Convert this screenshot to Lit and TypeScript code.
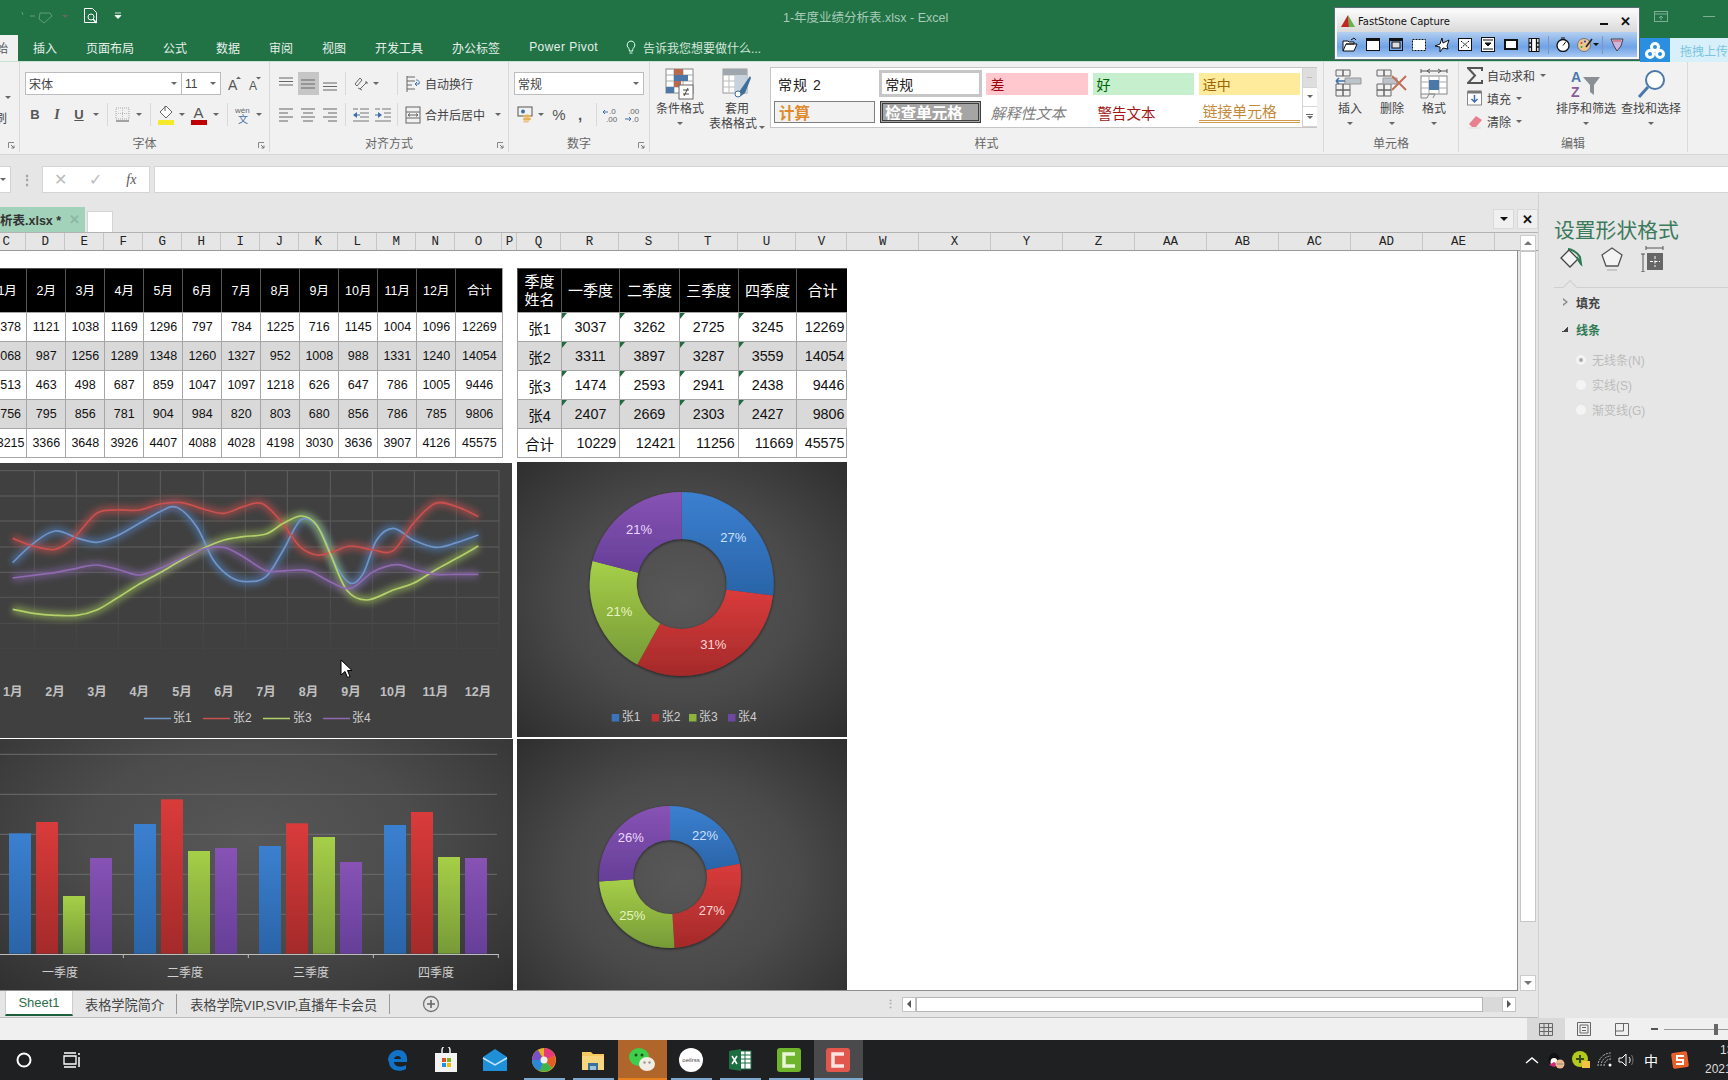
import { LitElement, html, css, svg } from "lit";
import { customElement } from "lit/decorators.js";

const ico = (w: number, h: number, body: unknown) =>
  html`<svg width=${w} height=${h} viewBox="0 0 ${w} ${h}" fill="none">${body}</svg>`;

const alignLines = (ys: number[], kind: string) => {
  const g = ys.map((y, i) => {
    const long = i % 2 === 0;
    let x1 = 1, x2 = 15;
    if (!long && kind === "c") { x1 = 3; x2 = 13; }
    if (!long && kind === "l") { x2 = 10; }
    if (!long && kind === "r") { x1 = 6; }
    return svg`<line x1=${x1} x2=${x2} y1=${y} y2=${y} stroke="#666"/>`;
  });
  return ico(16, 16, g);
};

const Icons = {
  preview: ico(16, 18, svg`<path d="M1.5 1.5h8l4 4v10h-12z" stroke="#fff" fill="#217346"/><circle cx="8" cy="10" r="3" stroke="#fff"/><path d="M10 12l3.5 4" stroke="#fff" stroke-width="1.5"/>`),
  redoDim: ico(38, 16, svg`<path d="M2 4l1 3M20 5h10l2 3-8 7-5-4z" stroke="#5f9d7c"/><path d="M10 8h5" stroke="#5f9d7c"/>`),
  qatDrop: ico(8, 8, svg`<path d="M1 1h6M1 3.5h6l-3 3z" stroke="#fff" fill="#fff" stroke-width=".8"/>`),
  bulb: ico(10, 15, svg`<path d="M5 1a4 4 0 0 0-2.5 7c.8.8.8 1.5.8 3h3.4c0-1.500 0-2.200.8-3A4 4 0 0 0 5 1zM3.500 13h3" stroke="#dfe" />`),
  grow: ico(14, 16, svg`<text x="0" y="14" font-size="14" fill="#555" font-family="Liberation Sans">A</text><path d="M8 3l2.500-2.500L13 3z" fill="#666"/>`),
  shrink: ico(14, 16, svg`<text x="1" y="14" font-size="12" fill="#555" font-family="Liberation Sans">A</text><path d="M8 1h5l-2.500 2.500z" fill="#666"/>`),
  border: ico(15, 15, svg`<rect x="1" y="1" width="13" height="11" stroke="#aaa" stroke-dasharray="1 1"/><path d="M7.500 1v11M1 6.500h13" stroke="#bbb" stroke-dasharray="1 1"/><path d="M1 14h13" stroke="#555"/>`),
  fill: ico(18, 20, svg`<path d="M9 1l6 6-6 6-6-6z" stroke="#666" fill="#fff"/><path d="M8 1v5" stroke="#666"/><rect x="1" y="15" width="16" height="5" fill="#f4ea2a"/>`),
  color: ico(16, 20, svg`<text x="2.500" y="13" font-size="15" fill="#555" font-family="Liberation Sans">A</text><rect y="15" width="16" height="5" fill="#c00000"/>`),
  wen: ico(16, 20, svg`<text x="0" y="8" font-size="8" fill="#666" font-family="Liberation Sans">wén</text><text x="3" y="18" font-size="10" fill="#4a6fa5" font-family="Noto Sans CJK SC">文</text>`),
  orient: ico(16, 16, svg`<path d="M2 8l5-6 2 2-5 6zM7 13l7-7M12 6h2v2" stroke="#666"/><path d="M5 12l4 2" stroke="#666"/>`),
  wrap: ico(15, 18, svg`<path d="M1 2h8M1 6h8M1 10h5M1 14h8" stroke="#666"/><path d="M1 1v16" stroke="#666"/><path d="M9 9h4c1-3-1-4-3-4M11 7L9 9l2 2" stroke="#3f6fa8"/>`),
  merge: ico(16, 18, svg`<rect x="1" y="1" width="14" height="16" stroke="#666"/><path d="M1 6h14M1 12h14M3 9h10M3 9l2-1.500M3 9l2 1.500M13 9l-2-1.500M13 9l-2 1.500" stroke="#666"/>`),
  indentL: ico(18, 16, svg`<path d="M8 2h9M8 6h9M8 10h9M1 14h16M1 2h5" stroke="#777"/><path d="M1 8l4-3v6z" fill="#3f6fa8"/><path d="M5 8h3" stroke="#3f6fa8"/>`),
  indentR: ico(18, 16, svg`<path d="M8 2h9M10 6h7M10 10h7M1 14h16M1 2h5" stroke="#777"/><path d="M8 8l-4-3v6z" fill="#3f6fa8"/><path d="M1 8h3" stroke="#3f6fa8"/>`),
  account: ico(16, 17, svg`<rect x="1" y="1" width="14" height="9" stroke="#555"/><circle cx="6" cy="5.500" r="2" fill="#3f6fa8"/><ellipse cx="10" cy="10" rx="4" ry="1.500" fill="#e5b35b"/><ellipse cx="10" cy="13" rx="4" ry="1.500" fill="#e5b35b"/><ellipse cx="9" cy="15.500" rx="3" ry="1.300" fill="#eec98a"/>`),
  decI: ico(18, 16, svg`<text x="6" y="7" font-size="8" fill="#666" font-family="Liberation Sans">.0</text><text x="3" y="15" font-size="8" fill="#666" font-family="Liberation Sans">.00</text><path d="M0 5h5M0 5l2-2M0 5l2 2" stroke="#3f6fa8"/>`),
  decD: ico(18, 16, svg`<text x="5" y="7" font-size="8" fill="#666" font-family="Liberation Sans">.00</text><text x="9" y="15" font-size="8" fill="#666" font-family="Liberation Sans">.0</text><path d="M2 12h6M8 12l-2-2M8 12l-2 2" stroke="#3f6fa8"/>`),
  launcher: ico(7, 7, svg`<path d="M.5 6V.5H6" stroke="#888"/><path d="M3 3l3 3M6 3.500V6H3.500" stroke="#777"/>`),
  cond: ico(30, 32, svg`<rect x="1" y="1" width="27" height="24" fill="#fff" stroke="#888"/><path d="M1 7h27M1 13h27M1 19h27M9 1v24M18 1v24" stroke="#aaa"/><rect x="9" y="1" width="9" height="6" fill="#b86a4e"/><rect x="9" y="7" width="14" height="6" fill="#4a78a8"/><rect x="9" y="13" width="7" height="6" fill="#b86a4e"/><rect x="1" y="19" width="8" height="6" fill="#4a78a8"/><rect x="14" y="17" width="14" height="14" fill="#fff" stroke="#666"/><path d="M18 22h6M18 26h6M23 20l-4 8" stroke="#444"/>`),
  tableFmt: ico(30, 32, svg`<rect x="1" y="1" width="24" height="24" fill="#fff" stroke="#999"/><path d="M1 7h24M1 13h24M1 19h24M7 1v24M13 1v24M19 1v24" stroke="#bbb"/><rect x="1" y="1" width="24" height="6" fill="#9fa6ad"/><rect x="13" y="7" width="12" height="18" fill="#c8d2dc"/><path d="M28 8L17 24l-3 5 5-1 4-3 6-15z" fill="#3d6f9c"/><circle cx="16" cy="26" r="3" fill="#fff" stroke="#3d6f9c"/>`),
  insert: ico(32, 32, svg`<path d="M2 2h7v6H2zM9 2h7v6H9zM2 16h7v6H2zM9 16h7v6H9zM2 22h7v6H2zM9 22h7v6H9z" stroke="#666"/><path d="M11 10h16v6H11z" fill="#bcc3ca" stroke="#999"/><path d="M11 13H2M2 13l3-3M2 13l3 3" stroke="#3f6fa8" stroke-width="1.500"/>`),
  del: ico(32, 32, svg`<path d="M1 2h7v6H1zM8 2h7v6H8zM1 22h7v6H1zM8 22h7v6H8zM1 16h7v6H1zM8 16h7v6H8z" stroke="#666"/><path d="M7 10h14v6H7z" fill="#bcc3ca" stroke="#999"/><path d="M16 8l14 14M30 8L16 22" stroke="#c0705a" stroke-width="2"/>`),
  format: ico(30, 32, svg`<path d="M2 3h26M2 1v4M28 1v4M8 3l3-2M8 3l3 2M22 3l-3-2M22 3l-3 2" stroke="#555"/><rect x="2" y="8" width="26" height="18" fill="#fff" stroke="#888"/><path d="M2 14h26M2 20h26M10 8v18M20 8v18" stroke="#aaa"/><rect x="10" y="12" width="10" height="10" fill="#4a78a8"/><path d="M2 26v4h6l2-4M10 26h6l-2 4" stroke="#888"/>`),
  sigma: ico(16, 17, svg`<path d="M15 4V1H1l7 7.500L1 16h14v-3" stroke="#555" stroke-width="2"/>`),
  fillDown: ico(15, 16, svg`<rect x=".5" y="2" width="14" height="13" stroke="#888" fill="#fff"/><rect x=".5" y=".5" width="14" height="3" fill="#777"/><path d="M7.500 5v7M4.500 9l3 3 3-3" stroke="#3f6fa8" stroke-width="1.500"/>`),
  eraser: ico(16, 15, svg`<path d="M2 10l7-8 6 4-6 7H5z" fill="#e8808f"/><path d="M1 14h13" stroke="#ddd"/>`),
  sort: ico(32, 30, svg`<text x="1" y="13" font-size="14" font-weight="700" fill="#4a78a8" font-family="Liberation Sans">A</text><text x="1" y="28" font-size="14" font-weight="700" fill="#8a5a9a" font-family="Liberation Sans">Z</text><path d="M13 8h17l-6 8v10l-4-3v-7z" fill="#8a8f94"/>`),
  find: ico(30, 30, svg`<circle cx="19" cy="11" r="9" stroke="#4a78a8" stroke-width="2" fill="#fff"/><path d="M12 18L3 28" stroke="#4a78a8" stroke-width="3"/>`),
  pFill: ico(26, 26, svg`<path d="M10 4l9 9-8 8-9-9z" stroke="#444" stroke-width="1.300" fill="#f3f3f3"/><path d="M9 3c3 0 9 3 12 8l1 7c-2-2-3-5-4-7" stroke="#2c7a52" stroke-width="2"/>`),
  pShape: ico(24, 26, svg`<path d="M12 2l10 7-4 11H6L2 9z" stroke="#555" stroke-width="1.300" fill="#f3f3f3"/><path d="M7 24h10" stroke="#aaa"/>`),
  pSize: ico(24, 26, svg`<path d="M6 2h17M3 8v18M1 8h4M1 26h4M6 0v4M23 0v4" stroke="#555"/><rect x="7" y="7" width="16" height="17" fill="#666"/><path d="M15 10v11M10 15.500h10" stroke="#fff" stroke-dasharray="3 1.500"/>`),
  plus: ico(18, 18, svg`<circle cx="9" cy="9" r="7.500" stroke="#777" stroke-width="1.300"/><path d="M9 5v8M5 9h8" stroke="#666" stroke-width="1.600"/>`),
  start: ico(18, 18, svg`<circle cx="9" cy="9" r="6.500" stroke="#fff" stroke-width="2"/>`),
  taskView: ico(18, 16, svg`<path d="M1 4h12v8H1zM1 1h12M1 15h12" stroke="#fff" stroke-width="1.300"/><path d="M16 1v2M16 5v10" stroke="#fff" stroke-width="1.500"/>`),
  edge: ico(24, 24, svg`<path d="M3 13C3 6 8 2 13 2c6 0 10 4 9 12H9c0 5 8 6 12 3v4c-7 4-17 1-17-7 0-1-1-1-1-1zm6-2h7c0-4-6-4-7 0z" fill="#1073c9"/>`),
  store: ico(24, 26, svg`<path d="M8 6V3a4 4 0 0 1 8 0v3" stroke="#eee" stroke-width="1.500"/><rect x="1" y="6" width="22" height="19" fill="#f3f3f3"/><rect x="8" y="11" width="4" height="4" fill="#d9512c"/><rect x="13" y="11" width="4" height="4" fill="#7fb21f"/><rect x="8" y="16" width="4" height="4" fill="#1c97dc"/><rect x="13" y="16" width="4" height="4" fill="#f2b80c"/>`),
  mail: ico(26, 24, svg`<path d="M1 9l12-8 12 8v14H1z" fill="#1f8fd8"/><path d="M1 10l12 7 12-7" stroke="#bfe6fb" stroke-width="1.500"/>`),
  pinwheel: ico(26, 26, svg`<circle cx="13" cy="13" r="12" fill="#e8b325"/><path d="M13 13L13 1a12 12 0 0 1 11 8z" fill="#e63a7a"/><path d="M13 13l11-4a12 12 0 0 1-3 12z" fill="#e45c27"/><path d="M13 13l8 8a12 12 0 0 1-12 3z" fill="#3db34a"/><path d="M13 13l-4 11a12 12 0 0 1-8-11z" fill="#2a88d8"/><path d="M13 13H1a12 12 0 0 1 6-10z" fill="#7a4fc8"/><circle cx="13" cy="13" r="3.500" fill="#eee"/>`),
  folder: ico(24, 22, svg`<path d="M1 3h9l2 2h11v16H1z" fill="#f4c95d"/><rect x="1" y="7" width="22" height="14" fill="#f7d67e"/><path d="M7 14h10v7H7z" fill="#3a6f9a"/><path d="M9 17h6v4H9z" fill="#9cc3dc"/>`),
  wechat: ico(28, 26, svg`<ellipse cx="11" cy="10" rx="10" ry="9" fill="#3fce4b"/><circle cx="8" cy="8" r="1.500" fill="#15551b"/><circle cx="14" cy="8" r="1.500" fill="#15551b"/><ellipse cx="19" cy="17" rx="8" ry="7" fill="#f1ece4"/><circle cx="16.500" cy="15.500" r="1.200" fill="#999"/><circle cx="21.500" cy="15.500" r="1.200" fill="#999"/>`),
  excelApp: ico(24, 24, svg`<rect x="11" y="3" width="12" height="18" fill="#fff" stroke="#1d6f42"/><path d="M11 7h12M11 11h12M11 15h12M17 3v18" stroke="#1d6f42"/><path d="M1 3l12-2v22L1 21z" fill="#1d6f42"/><path d="M4 8l5 8M9 8l-5 8" stroke="#fff" stroke-width="1.500"/>`),
  camGreen: ico(24, 24, svg`<rect width="24" height="24" rx="3" fill="#6fb52c"/><path d="M18 6H7v12h11" stroke="#e8f6d8" stroke-width="3.500"/>`),
  camRed: ico(24, 24, svg`<rect width="24" height="24" rx="3" fill="#e2574c"/><path d="M18 6H7v12h11" stroke="#fbe3e0" stroke-width="3.500"/>`),
  up: ico(14, 8, svg`<path d="M1 7l6-5 6 5" stroke="#fff" stroke-width="1.500"/>`),
  qq: ico(18, 18, svg`<ellipse cx="7" cy="9" rx="5.500" ry="7" fill="#111"/><ellipse cx="7" cy="11" rx="3.500" ry="4" fill="#fff"/><path d="M2 14l5-3 5 3-5 2z" fill="#d02a7a"/><circle cx="13" cy="13" r="4.500" fill="#e8b98a"/><path d="M10 13h6" stroke="#888"/>`),
  green: ico(18, 18, svg`<circle cx="8" cy="8" r="8" fill="#b5c81e"/><path d="M8 4v8M4 8h8" stroke="#3a4a10" stroke-width="2"/><rect x="10" y="10" width="8" height="7" fill="#f3c344"/>`),
  wifi: ico(16, 16, svg`<path d="M1 14a13 13 0 0 1 13-13M4 14a10 10 0 0 1 10-10M7 14a7 7 0 0 1 7-7" stroke="#bbb" stroke-dasharray="2 1"/><circle cx="13" cy="13" r="1.500" fill="#fff"/>`),
  speaker: ico(16, 16, svg`<path d="M1 6h3l4-4v12l-4-4H1z" stroke="#fff"/><path d="M11 5c1.500 2 1.500 4 0 6" stroke="#fff"/><path d="M13.500 3c2 3 2 7 0 10" stroke="#777"/>`),
  sogou: ico(18, 18, svg`<rect x="1" y="1" width="16" height="16" rx="2" fill="#e8622c" transform="rotate(-8 9 9)"/><path d="M13 5H6v4h6v4H5" stroke="#fff" stroke-width="2"/>`),
  normal: ico(14, 13, svg`<path d="M.5.5h13v12H.5zM.5 4.500h13M.5 8.500h13M5 .5v12M9.500.5v12" stroke="#666"/>`),
  pageView: ico(14, 14, svg`<path d="M.5.500h13v13H.5z" stroke="#666"/><path d="M3 3h8v8H3zM5 5.500h4M5 8.500h4" stroke="#666"/>`),
  breakView: ico(14, 13, svg`<path d="M.5.500h13v12H.5zM.5 8h8V.5" stroke="#666"/>`),
  fsOpen: ico(16, 15, svg`<path d="M1 14V4h5l1 1h5v2H4L1 14h11l3-7H4" stroke="#111" fill="#fff"/><path d="M9 3l3-2 2 2" stroke="#111"/>`),
  fsWin: ico(14, 13, svg`<rect x=".5" y=".5" width="13" height="12" stroke="#111" fill="#fff"/><rect width="14" height="3" fill="#111"/>`),
  fsWin2: ico(14, 13, svg`<rect x=".5" y=".5" width="13" height="12" stroke="#111"/><rect x="3" y="4" width="8" height="6" stroke="#111" fill="#ddd"/><rect x="1" y="1" width="12" height="2" fill="#111"/>`),
  fsRect: ico(14, 12, svg`<rect x=".5" y=".5" width="13" height="11" stroke="#111" stroke-dasharray="2 1" fill="#fff"/>`),
  fsFree: ico(16, 16, svg`<path d="M1 9l5-2 2-6 1 5 6-3-2 6 1 3-5-1-3 4v-5z" stroke="#111" fill="#fff"/>`),
  fsFull: ico(14, 13, svg`<rect x=".5" y=".5" width="13" height="12" stroke="#111" fill="#fff"/><path d="M3 3l8 7M11 3l-8 7" stroke="#111" stroke-dasharray="2 1"/>`),
  fsScroll: ico(14, 15, svg`<rect x=".5" y=".5" width="13" height="14" stroke="#111" fill="#fff"/><path d="M2 3h10M2 12h10M4 6h6l-3 3z" stroke="#111" fill="#111"/>`),
  fsFixed: ico(14, 11, svg`<rect x="1" y="1" width="12" height="9" stroke="#111" stroke-width="2" fill="#fff"/>`),
  fsFilm: ico(12, 14, svg`<rect x="1" y=".5" width="10" height="13" stroke="#111" fill="#fff"/><path d="M3.500.5v13M8.500.5v13M1 5h2.500M1 9h2.500M8.500 5H11M8.500 9H11" stroke="#111" stroke-width="1.300"/>`),
  fsTimer: ico(14, 15, svg`<circle cx="7" cy="8.500" r="6" stroke="#111" stroke-width="1.300" fill="#fff"/><path d="M7 8.500l3-4M5 1h4" stroke="#111"/>`),
  fsPalette: ico(16, 15, svg`<circle cx="7" cy="8" r="6.500" fill="#e8c890" stroke="#777"/><circle cx="4.500" cy="6" r="1" fill="#d33"/><circle cx="8" cy="4.500" r="1" fill="#33a"/><circle cx="4.500" cy="10" r="1" fill="#3a3"/><path d="M9 10L15 2" stroke="#222" stroke-width="1.500"/>`),
  fsTag: ico(14, 15, svg`<path d="M1 2h12l-2 7-4 5-3-5z" fill="#cdb6dd" stroke="#444"/><path d="M3 4h8" stroke="#d9534f"/>`),
  fsLogo: ico(16, 14, svg`<path d="M8 1l7 12H9z" fill="#5fb548"/><path d="M8 1L1 13h8z" fill="#c0261f"/>`),
  cloud: ico(20, 17, svg`<g stroke="#fff" stroke-width="3"><circle cx="10" cy="5" r="3.500"/><circle cx="5" cy="12" r="3.500"/><circle cx="15" cy="12" r="3.500"/></g>`),
  ribbonOpt: ico(14, 11, svg`<rect x=".5" y=".5" width="13" height="10" stroke="#7fae95"/><path d="M.5 3h13M7 5v4M5 7l2-2 2 2" stroke="#7fae95"/>`),
};

const COLS: [string, number][] = [
  ["C", 39.3], ["D", 39], ["E", 39], ["F", 39], ["G", 39], ["H", 39], ["I", 39], ["J", 39], ["K", 39], ["L", 39], ["M", 39], ["N", 39],
  ["O", 47.2], ["P", 14.8], ["Q", 43.3], ["R", 58.7], ["S", 59.3], ["T", 59.2], ["U", 58.7], ["V", 51],
  ["W", 71.6], ["X", 72], ["Y", 72], ["Z", 72], ["AA", 72], ["AB", 72], ["AC", 72], ["AD", 72], ["AE", 72],
];

const T1_HEAD = ["1月", "2月", "3月", "4月", "5月", "6月", "7月", "8月", "9月", "10月", "11月", "12月", "合计"];
const T1 = [
  "1378 1121 1038 1169 1296 797 784 1225 716 1145 1004 1096 12269",
  "1068 987 1256 1289 1348 1260 1327 952 1008 988 1331 1240 14054",
  "1513 463 498 687 859 1047 1097 1218 626 647 786 1005 9446",
  "1756 795 856 781 904 984 820 803 680 856 786 785 9806",
  "13215 3366 3648 3926 4407 4088 4028 4198 3030 3636 3907 4126 45575",
].map((r) => r.split(" "));
const T2_HEAD = ["一季度", "二季度", "三季度", "四季度", "合计"];
const T2 = [
  ["张1", "3037", "3262", "2725", "3245", "12269"],
  ["张2", "3311", "3897", "3287", "3559", "14054"],
  ["张3", "1474", "2593", "2941", "2438", "9446"],
  ["张4", "2407", "2669", "2303", "2427", "9806"],
  ["合计", "10229", "12421", "11256", "11669", "45575"],
];

const MONTHS = ["1月", "2月", "3月", "4月", "5月", "6月", "7月", "8月", "9月", "10月", "11月", "12月"];
const SERIES: { c: string; g: string; pts: [number, number][] }[] = [
  { c: "#6f94c8", g: "#4f81bd", pts: [[38,308],[100,250],[165,213],[235,235],[290,247],[350,228],[418,190],[480,155],[530,142],[590,200],[640,300],[690,350],[740,365],[798,350],[850,270],[905,178],[960,210],[1010,320],[1052,370],[1090,340],[1130,240],[1180,205],[1240,240],[1306,262],[1370,248],[1435,225]] },
  { c: "#c8504e", g: "#c0504d", pts: [[38,235],[100,258],[165,268],[220,235],[290,160],[350,150],[418,150],[480,132],[545,128],[620,150],[672,160],[730,140],[785,130],[840,180],[900,260],[950,285],[1000,275],[1052,258],[1120,270],[1180,272],[1240,190],[1306,130],[1370,140],[1435,170]] },
  { c: "#b3d06a", g: "#9bbb59", pts: [[38,448],[100,460],[165,466],[230,466],[290,450],[350,415],[418,372],[480,338],[545,300],[610,265],[672,240],[730,230],[798,222],[850,190],[905,168],[950,195],[990,280],[1040,390],[1100,420],[1180,390],[1240,370],[1306,330],[1370,295],[1435,258]] },
  { c: "#9069b0", g: "#8064a2", pts: [[38,354],[100,346],[165,338],[230,325],[290,315],[360,330],[418,345],[480,325],[545,295],[610,267],[672,262],[730,290],[798,332],[860,332],[925,332],[990,365],[1052,385],[1120,335],[1190,314],[1250,330],[1306,343],[1370,343],[1435,343]] },
];
const smooth = (raw: [number, number][]) => {
  const p = raw.map(([x, y]) => [x / 3, 460 + y / 3]);
  let d = `M${p[0][0]} ${p[0][1]}`;
  for (let i = 0; i < p.length - 1; i++) {
    const a = p[i - 1] || p[i], b = p[i], c = p[i + 1], e = p[i + 2] || c;
    d += `C${b[0] + (c[0] - a[0]) / 6} ${b[1] + (c[1] - a[1]) / 6} ${c[0] - (e[0] - b[0]) / 6} ${c[1] - (e[1] - b[1]) / 6} ${c[0]} ${c[1]}`;
  }
  return d;
};

const BARS = [
  [[27, 280], [108, 246], [189, 468], [270, 354]],
  [[402, 252], [483, 178], [564, 333], [645, 324]],
  [[777, 318], [858, 250], [939, 291], [1020, 366]],
  [[1152, 255], [1233, 216], [1314, 351], [1395, 354]],
];
const FILLS = ["url(#gB)", "url(#gR)", "url(#gG)", "url(#gP)"];
const LEG = ["#3a74bd", "#bf3232", "#8cb33e", "#6e47a0"];

const arc = (cx: number, cy: number, R: number, r: number, a0: number, a1: number) => {
  const pt = (rad: number, a: number) => {
    const t = ((a - 90) * Math.PI) / 180;
    return `${cx + rad * Math.cos(t)} ${cy + rad * Math.sin(t)}`;
  };
  const big = a1 - a0 > 180 ? 1 : 0;
  return `M${pt(R, a0)}A${R} ${R} 0 ${big} 1 ${pt(R, a1)}L${pt(r, a1)}A${r} ${r} 0 ${big} 0 ${pt(r, a0)}Z`;
};

const chartDefs = svg`<defs>
  <linearGradient id="gB" x1="0" y1="0" x2="0" y2="1"><stop offset="0" stop-color="#3b80d0"/><stop offset="1" stop-color="#2a64a8"/></linearGradient>
  <linearGradient id="gR" x1="0" y1="0" x2="0" y2="1"><stop offset="0" stop-color="#da3b3b"/><stop offset="1" stop-color="#a42a2a"/></linearGradient>
  <linearGradient id="gG" x1="0" y1="0" x2="0" y2="1"><stop offset="0" stop-color="#a6cf48"/><stop offset="1" stop-color="#779a38"/></linearGradient>
  <linearGradient id="gP" x1="0" y1="0" x2="0" y2="1"><stop offset="0" stop-color="#8753b4"/><stop offset="1" stop-color="#653f98"/></linearGradient>
  <filter id="dsh" x="-10%" y="-10%" width="120%" height="120%"><feDropShadow dx="0" dy="1" stdDeviation="1.500" flood-color="#000" flood-opacity=".6"/></filter>
</defs>`;

const donut = (vb: string, w: number, h: number, cx: number, cy: number, R: number, r: number, vals: number[], labels: [number, number][], legend: boolean) => {
  let acc = 0;
  const tints = ["#cfe0ff", "#ffd8d8", "#e6f5c0", "#ecd8ff"];
  return html`<svg class="chart-svg" width=${w} height=${h} viewBox=${vb}>
    ${chartDefs}
    <g filter="url(#dsh)">
      ${vals.map((v, i) => {
        const a0 = (acc / 100) * 360;
        acc += v;
        return svg`<path d=${arc(cx, cy, R, r, a0, (acc / 100) * 360)} fill=${FILLS[i]}/>`;
      })}
    </g>
    ${vals.map((v, i) => svg`<text x=${labels[i][0]} y=${labels[i][1]} text-anchor="middle" dominant-baseline="middle" class="dl" fill=${tints[i]}>${v}%</text>`)}
    ${legend
      ? [611.7, 651.7, 689, 728].map((x, i) => svg`<rect x=${x} y="714" width="7.500" height="7.500" fill=${LEG[i]}/><text x=${x + 10} y="718" dominant-baseline="middle" class="lg">张${i + 1}</text>`)
      : ""}
  </svg>`;
};

@customElement("app-root")
export class AppRoot extends LitElement {
  static styles = css`
    :host { display: block; width: 1728px; height: 1080px; overflow: hidden; font-family: "Liberation Sans", "Noto Sans CJK SC", sans-serif; color: #444; }
    * { box-sizing: border-box; }
    .app { position: relative; width: 1728px; height: 1080px; overflow: hidden; display: flex; flex-direction: column; background: #e6e6e6; }
    svg { display: block; flex: none; }

    .title { height: 34px; padding-bottom: 2px; background: #217346; display: flex; align-items: center; flex: none; }
    .qat { width: 783px; display: flex; align-items: center; padding-left: 20px; gap: 3px; }
    .qat .q2 { margin-left: 1px; }
    .qat .q3 { margin-left: 12px; }
    .qarr { display: block; border-top-color: #fff; }
    .doc { font-size: 12.5px; color: #a8cbb8; white-space: nowrap; }
    .wins { margin-left: auto; display: flex; align-items: center; gap: 35px; padding-right: 13px; }
    .minbtn { width: 12px; height: 1px; background: #7fae95; }

    .tabs { height: 27px; padding-bottom: 1px; background: #217346; display: flex; gap: 29px; align-items: center; font-size: 12px; color: #e6f0ea; white-space: nowrap; flex: none; }
    .pp { letter-spacing: .45px; }
    .tab-a { width: 18px; height: 26px; margin-top: 1px; margin-right: -14px; background: #f1f1f1; color: #555; display: flex; justify-content: flex-end; align-items: center; overflow: hidden; padding-right: 10px; }
    .tell { display: flex; align-items: center; gap: 7px; margin-left: -1px; color: #d5e6dc; }

    .ribbon { height: 94px; background: #f1f1f2; border-top: 1px solid #c4e2d2; border-bottom: 1px solid #d6d6d6; display: flex; flex: none; font-size: 12px; color: #444; }
    .grp { position: relative; height: 90px; border-right: 1px solid #d9d9d9; display: flex; flex-direction: column; flex: none; }
    .gbody { height: 74px; flex: none; }
    .glabel { height: 16px; line-height: 17px; text-align: center; color: #666; white-space: nowrap; }
    .launch { position: absolute; right: 4px; bottom: 3px; }
    .g-clip { width: 20px; }
    .g-font { width: 250px; }
    .g-align { width: 239px; }
    .g-num { width: 141px; }
    .g-style { width: 674px; }
    .g-cells { width: 135px; }
    .g-edit { width: 229px; }
    .clip-body { display: flex; flex-direction: column; align-items: flex-start; height: 74px; padding-top: 34px; }
    .clip-txt { margin-left: -5px; line-height: 16px; margin-top: 12px; }
    .clip-arrow { margin-left: 5px; }
    .stack { display: flex; flex-direction: column; gap: 8px; padding-top: 10px; }
    .r { display: grid; align-items: center; height: 23px; }
    .r > * { justify-self: center; }
    .arr { width: 0; height: 0; border-left: 3px solid transparent; border-right: 3px solid transparent; border-top: 3px solid #666; }
    .sep { width: 1px; height: 23px; background: #d9d9d9; }
    .sel { height: 23px; border: 1px solid #bdbdbd; background: #fff; display: flex; align-items: center; justify-content: space-between; padding: 0 4px 0 3px; color: #444; }
    .f1 { display: flex; padding-left: 5px; align-items: center; }
    .f1 .fn { width: 157px; }
    .f1 .fz { width: 39px; border-left: 0; }
    .f1 .g { margin-left: 7px; }
    .f1 .s { margin-left: 6px; }
    .f2 { margin-left: 4px; grid-template-columns: 22px 22px 22px 12px 10px 20px 14px 8px 24px 8px 26px 8px 14px 18px 14px; }
    .b { font-weight: 700; font-size: 13px; color: #555; }
    .i { font-style: italic; font-weight: 700; font-family: "Liberation Serif", serif; font-size: 14px; color: #555; }
    .u { text-decoration: underline; font-weight: 700; font-size: 13px; color: #555; }
    .a { margin-left: 5px; grid-template-columns: 22.500px 21px 23px 7px 24.500px 20.500px 8.500px 22px auto auto; }
    .a .on { width: 21px; height: 23px; background: #c6c6c6; display: flex; align-items: center; justify-content: center; }
    .a .txt { justify-self: start; margin-left: 1px; white-space: nowrap; }
    .a .st { justify-self: start; margin-left: 0; }
    .a .mergearr { margin-left: 2px; justify-self: start; }
    .n1 { padding-left: 5px; padding-right: 5px; }
    .n2 { margin-left: 5px; grid-template-columns: 22px 10px 26px 16px 4px 8px 24px 16px; }
    .pct { font-size: 15px; color: #555; }
    .comma { font-size: 15px; font-weight: 700; color: #555; }

    .hrow { display: flex; height: 74px; }
    .bigbtn { display: flex; flex-direction: column; align-items: center; padding-top: 6px; line-height: 15px; white-space: nowrap; gap: 0; flex: none; }
    .bigbtn .ic { height: 32px; margin-bottom: 2px; display: flex; align-items: center; }
    .bigbtn .arr { margin-top: 5px; }
    .w60 { width: 60px; }
    .w54 { width: 54px; }
    .w42 { width: 42px; }
    .w66 { width: 66px; }
    .w64 { width: 64px; }
    .inl { display: flex; align-items: center; gap: 2px; }
    .cells-row { padding-left: 5px; }

    .gallery { width: 547px; height: 61px; margin: 5px 0 0 6px; border: 1px solid #c6c6c6; background: #fff; display: flex; flex: none; }
    .gcells { display: grid; grid-template-columns: repeat(5, 106.200px); grid-template-rows: 31px 28px; width: 531px; font-size: 14px; color: #222; }
    .gc { margin: 5px 2px 4px 3px; display: flex; align-items: center; padding-left: 4px; white-space: nowrap; overflow: hidden; }
    .gc.low { margin: 2px 2px 4px 3px; }
    .c-n2 { letter-spacing: 1px; }
    .c-n { border: 3px solid #c6c6c6; padding-left: 3px; margin: 2px 1px 2px 2px; }
    .c-bad { background: #ffc7ce; color: #9c0006; }
    .c-good { background: #c6efce; color: #006100; }
    .c-mid { background: #ffeb9c; color: #9c6500; }
    .c-calc { background: #f2f2f2; border: 1px solid #7f7f7f; color: #e08a2c; font-weight: 700; font-size: 15.500px; }
    .c-chk { background: #a5a5a5; border: 3px double #3f3f3f; color: #fff; font-weight: 700; font-size: 15.500px; padding-left: 2px; }
    .c-exp { color: #7f7f7f; font-style: italic; font-size: 15px; }
    .c-warn { color: #a31515; font-size: 14.500px; padding-left: 5px; }
    .c-link { color: #c48a3a; font-size: 14.800px; border-bottom: 3px double #d09a4c; }
    .gscroll { width: 15px; display: flex; flex-direction: column; border-left: 1px solid #d4d4d4; flex: none; }
    .gscroll > div { height: 19.600px; display: flex; align-items: center; justify-content: center; border-bottom: 1px solid #d4d4d4; background: #fff; }
    .gscroll > .dis { background: #dedede; }
    .tinyu { width: 5px; height: 1.500px; background: #bbb; }
    .moredrop { display: flex; flex-direction: column; align-items: center; gap: 1px; }
    .barline { width: 7px; height: 1px; background: #666; }

    .small-col { width: 94px; display: flex; flex-direction: column; padding: 4px 0 0 8px; gap: 5px; flex: none; }
    .sm { height: 18px; display: flex; align-items: center; gap: 5px; white-space: nowrap; }
    .sm .slot { width: 15px; display: flex; justify-content: center; }

    .strip { height: 11px; flex: none; }
    .fbar { height: 27px; display: flex; flex: none; }
    .namebox { width: 11px; background: #fff; border: 1px solid #d4d4d4; border-left: 0; display: flex; align-items: center; }
    .dots { width: 31px; display: flex; align-items: center; justify-content: center; color: #999; font-size: 12px; font-weight: 700; }
    .fxbox { width: 108px; background: #fff; border: 1px solid #d4d4d4; display: flex; align-items: center; font-family: "Liberation Serif", serif; }
    .fxbox span { width: 36px; text-align: center; color: #bbb; font-size: 16px; }
    .fxbox .fx { color: #555; font-style: italic; font-size: 14px; }
    .finput { margin-left: 4px; flex: 1; background: #fff; border: 1px solid #d4d4d4; border-right: 0; }

    .work { flex: 1; display: flex; min-height: 0; }
    .left { width: 1539px; display: flex; flex-direction: column; flex: none; border-right: 1px solid #d2d2d2; }
    .docrow { height: 39px; display: flex; align-items: flex-end; flex: none; }
    .dtab { width: 85px; height: 25px; background: #a3d2bb; color: #333; font-size: 12.500px; font-weight: 700; display: flex; align-items: center; justify-content: space-between; padding-right: 5px; white-space: nowrap; overflow: hidden; }
    .dtab .x { color: #8ab8a2; font-size: 13px; }
    .dnew { width: 26px; height: 21px; background: #fff; border: 1px solid #d4d4d4; border-bottom: 0; margin-left: 2px; }
    .dctl { margin-left: auto; display: flex; height: 21px; margin-bottom: 2px; gap: 3px; padding-right: 0; }
    .dctl div { width: 21px; height: 20px; background: #f0f0f0; border: 1px solid #d9d9d9; display: flex; align-items: center; justify-content: center; color: #111; font-weight: 700; font-size: 13px; }
    .tri-d { width: 0; height: 0; border-left: 4px solid transparent; border-right: 4px solid transparent; border-top: 4px solid #111; }
    .colhead { height: 19px; display: flex; flex: none; margin-left: -13px; background: #e6e6e6; border-top: 1px solid #b3b3b3; border-bottom: 1px solid #9a9a9a; font-family: "Liberation Mono", monospace; font-size: 12.500px; color: #222; }
    .colhead div { flex: none; text-align: center; line-height: 19px; border-right: 1px solid #c6c6c6; }
    .colhead .tail { width: 24px; border-right: 0; }

    .sheetrow { height: 740px; flex: none; display: flex; }
    .sheet { width: 1518px; background: #fff; border-right: 1px solid #8f8f8f; border-bottom: 1px solid #8f8f8f; overflow: hidden; flex: none; }
    .sgrid { margin-left: -13px; padding-top: 17px; display: grid; grid-template-columns: 530.300px 330.200px; }
    .lcol, .rcol { display: flex; flex-direction: column; }
    .table { display: grid; grid-template-rows: 44px repeat(5, 29px); border-right: 1px solid #a6a6a6; border-bottom: 1px solid #a6a6a6; }
    .t1 { width: 515.500px; grid-template-columns: 39.300px repeat(11, 39px) 47.200px; font-size: 12.500px; }
    .t2 { width: 330.200px; grid-template-columns: 43.300px 58.700px 59.300px 59.200px 58.700px 51px; font-size: 14.300px; }
    .td { position: relative; display: flex; align-items: center; justify-content: center; border-left: 1px solid #a6a6a6; border-top: 1px solid #a6a6a6; color: #111; white-space: nowrap; overflow: hidden; }
    .th { background: #000; color: #fff; border-color: #555; font-size: 12.500px; text-align: center; line-height: 18px; }
    .t2 .th { font-size: 15px; }
    .t2 .nm { font-size: 14.500px; }
    .alt { background: #d9d9d9; }
    .rgt { justify-content: flex-end; padding-right: 3px; }
    .mark::before { content: ""; position: absolute; left: 0; top: 0; border-top: 6px solid #1f6b3f; border-right: 5px solid transparent; }
    .c1 { width: 525px; height: 275px; margin-top: 5px; background: #404040; flex: none; }
    .c2 { width: 526px; height: 251px; margin-top: 1px; background: radial-gradient(ellipse at 50% 40%, #575757 0%, #4c4c4c 45%, #2f2f2f 100%); flex: none; }
    .c3 { width: 330px; height: 275px; margin-top: 4px; background: radial-gradient(ellipse at 50% 50%, #585858 0%, #4a4a4a 50%, #2e2e2e 100%); flex: none; }
    .c4 { width: 330px; height: 251px; margin-top: 2px; background: radial-gradient(ellipse at 50% 55%, #585858 0%, #4a4a4a 50%, #2e2e2e 100%); flex: none; }
    .chart-svg { font-family: "Liberation Sans", "Noto Sans CJK SC", sans-serif; }
    .dl { font-size: 13px; }
    .lg { font-size: 12px; fill: #cfcfcf; }
    .axl { font-size: 12.500px; font-weight: 700; fill: #c0c0c0; }
    .axq { font-size: 12px; fill: #d0d0d0; }

    .vs { width: 20px; display: flex; flex-direction: column; align-items: flex-start; padding-left: 2px; margin-top: -16px; position: relative; flex: none; }
    .vs .btn { width: 16px; height: 16px; background: #fff; border: 1px solid #ccc; display: flex; align-items: center; justify-content: center; flex: none; }
    .tri-u { width: 0; height: 0; border-left: 4px solid transparent; border-right: 4px solid transparent; border-bottom: 4px solid #777; }
    .tri-dd { width: 0; height: 0; border-left: 4px solid transparent; border-right: 4px solid transparent; border-top: 4px solid #777; }
    .thumb { width: 16px; height: 671px; background: #fff; border: 1px solid #c6c6c6; flex: none; }
    .vs .gap { flex: 1; }

    .stabs { height: 27px; flex: none; display: flex; align-items: center; border-bottom: 1px solid #bdbdbd; font-size: 13.200px; color: #444; white-space: nowrap; }
    .st-on { width: 68px; height: 25px; margin: -2px 0 0 5px; background: #fff; border-bottom: 2px solid #1d5f3c; border-left: 1px solid #ccc; border-right: 1px solid #ccc; color: #2f6e4d; display: flex; align-items: center; justify-content: center; font-size: 13px; flex: none; }
    .st1 { margin-left: 12px; flex: none; }
    .st2 { margin-left: 13px; flex: none; }
    .stsep { width: 1px; height: 20px; background: #999; margin-left: 12px; flex: none; }
    .stplus { margin-left: 32px; flex: none; }
    .sdots { margin-left: auto; color: #aaa; font-weight: 700; font-size: 11px; width: 5px; flex: none; }
    .hs { margin-left: 12px; display: flex; align-items: center; flex: none; margin-right: 22px; }
    .hs .btn { width: 14px; height: 15px; background: #fff; border: 1px solid #c4c4c4; display: flex; align-items: center; justify-content: center; flex: none; }
    .hs .trk { width: 567px; height: 15px; background: #fff; border: 1px solid #b5b5b5; flex: none; }
    .hs .rest { width: 19px; height: 15px; background: #d9d9d9; flex: none; }
    .tri-l { width: 0; height: 0; border-top: 4px solid transparent; border-bottom: 4px solid transparent; border-right: 4px solid #555; }
    .tri-r { width: 0; height: 0; border-top: 4px solid transparent; border-bottom: 4px solid transparent; border-left: 4px solid #555; }

    .pane { flex: 1; padding: 23px 0 0 15px; background: #e6e6e6; }
    .ptitle { font-size: 20.800px; line-height: 30px; color: #3c7a5c; white-space: nowrap; }
    .picons { display: flex; margin: 0 0 0 5px; gap: 14px; align-items: center; height: 26px; }
    .picons .pi { width: 26px; display: flex; justify-content: center; }
    .pline { position: relative; height: 1px; background: #cfcfcf; margin-top: 15px; }
    .pline::after { content: ""; position: absolute; left: 11px; top: -5px; width: 9px; height: 9px; background: #e6e6e6; border-left: 1px solid #cfcfcf; border-top: 1px solid #cfcfcf; transform: rotate(45deg); }
    .psec { display: flex; align-items: center; height: 16px; font-size: 12px; font-weight: 700; color: #444; }
    .psec.first { margin-top: 6px; }
    .psec.g2 { margin-top: 11px; color: #2f7a55; }
    .psec .t { width: 22px; display: flex; justify-content: center; }
    .tri-o { width: 0; height: 0; border-top: 4.500px solid transparent; border-bottom: 4.500px solid transparent; border-left: 5px solid #888; position: relative; }
    .tri-o::after { content: ""; position: absolute; left: -4.500px; top: -2.500px; border-top: 2.500px solid transparent; border-bottom: 2.500px solid transparent; border-left: 3px solid #e6e6e6; }
    .tri-s { width: 6px; height: 6px; background: linear-gradient(135deg, transparent 50%, #444 50%); }
    .prad { display: flex; align-items: center; height: 25px; padding-left: 22px; gap: 6px; font-size: 12px; color: #bcbcbc; white-space: nowrap; }
    .rad1 { margin-top: 10px; }
    .rd { width: 10px; height: 10px; border-radius: 50%; background: #f4f4f4; display: flex; align-items: center; justify-content: center; }
    .rd i { width: 4px; height: 4px; border-radius: 50%; background: #aaa; display: block; }

    .status { height: 22px; background: #f1f0f1; display: flex; align-items: center; flex: none; padding-left: 1527px; }
    .vw { width: 38px; height: 22px; display: flex; align-items: center; justify-content: center; flex: none; }
    .vw.on { background: #d9d9d9; }
    .zm { margin-left: 10px; width: 7px; height: 2px; background: #555; flex: none; }
    .slider { margin-left: 6px; width: 72px; height: 1px; background: #999; position: relative; flex: none; }
    .slider i { position: absolute; left: 50px; top: -5px; width: 4px; height: 11px; background: #666; }

    .taskbar { height: 40px; background: #1f2022; display: flex; flex: none; overflow: hidden; }
    .tb { position: relative; width: 49px; height: 40px; display: flex; align-items: center; justify-content: center; flex: none; }
    .tb48 { width: 48px; }
    .tbspace { width: 276.500px; flex: none; }
    .tb.run::after { content: ""; position: absolute; left: 4px; right: 4px; bottom: 0; height: 2px; background: #7fa8cf; }
    .tb.wc { background: #b0652a; }
    .tb.wc::after { left: 0; right: 0; background: #e8801c; }
    .tb.act { background: #4a4a4d; }
    .tb.act::after { left: 0; right: 0; }
    .circle { width: 24px; height: 24px; border-radius: 50%; background: #fff; color: #444; font-size: 6px; display: flex; align-items: center; justify-content: center; }
    .tray { margin-left: auto; height: 40px; display: grid; align-items: center; grid-template-columns: 24px 24px 26px 22px 20px 30px 28px 11px 23px; }
    .ti { display: flex; justify-content: center; color: #fff; font-size: 14px; }
    .clock { color: #ddd; font-size: 12px; line-height: 19px; white-space: nowrap; overflow: hidden; }
    .clock div:first-child { padding-left: 15px; }

    .fsw { position: absolute; left: 1335px; top: 8px; width: 304px; height: 51px; border: 2px solid #f4f6f8; outline: 1px solid #5a6a75; }
    .fs-t { height: 22px; background: linear-gradient(#fbfbfb, #d9d9d9); display: flex; align-items: center; padding: 0 6px 0 3px; color: #111; gap: 2px; font-family: "DejaVu Sans", sans-serif; font-size: 10px; white-space: nowrap; }
    .fs-t .m { margin-left: auto; width: 8px; height: 2px; background: #111; margin-top: 6px; }
    .fs-t .c { margin-left: 10px; font-size: 13px; font-weight: 700; font-family: "Liberation Sans", sans-serif; }
    .fs-b { height: 25px; background: linear-gradient(#b4cff0, #6fa2e6 60%, #a9c9f2); display: flex; align-items: center; padding-left: 1px; }
    .fs-b .k { width: 23px; display: flex; justify-content: center; flex: none; }
    .fs-b .kw { width: 21px; }
    .fs-b .ks { width: 1px; height: 18px; background: #7a96bc; margin: 0 3px; flex: none; }
    .fs-b .fa { width: 0; height: 0; border-left: 3px solid transparent; border-right: 3px solid transparent; border-top: 3px solid #111; margin-left: -3px; flex: none; }
    .upl { position: absolute; left: 1640px; top: 38px; width: 88px; height: 24px; display: flex; background: #d7f0fa; font-size: 12px; color: #7cc5e0; white-space: nowrap; overflow: hidden; align-items: center; }
    .upl .ub { width: 30px; height: 24px; background: #2a8fe0; display: flex; align-items: center; justify-content: center; flex: none; }
    .upl span { margin-left: 10px; }
    .cursor { position: absolute; left: 340px; top: 659px; }
  `;

  private colHead() {
    return html`<div class="colhead">
      ${COLS.map(([n, w]) => html`<div style="width:${w}px">${n}</div>`)}
      <div class="tail"></div>
    </div>`;
  }

  private table1() {
    return html`<div class="table t1">
      ${T1_HEAD.map((h) => html`<div class="td th">${h}</div>`)}
      ${T1.map((r, i) => r.map((v) => html`<div class="td ${i % 2 ? "alt" : ""}">${v}</div>`))}
    </div>`;
  }

  private table2() {
    return html`<div class="table t2">
      <div class="td th">季度<br />姓名</div>
      ${T2_HEAD.map((h) => html`<div class="td th">${h}</div>`)}
      ${T2.map((r, i) =>
        r.map((v, j) => {
          const cls = [i % 2 === 1 ? "alt" : "", j === 0 ? "nm" : "", j === 5 || (i === 4 && j > 0) ? "rgt" : "", i < 4 && j > 0 && j < 5 ? "mark" : ""].join(" ");
          return html`<div class="td ${cls}">${v}</div>`;
        })
      )}
    </div>`;
  }

  private lineChart() {
    const hs = [32, 108, 183, 261, 337, 412, 490, 565];
    const vs = [103, 229, 355, 481, 610, 736, 862, 991, 1117, 1243, 1369, 1497];
    const ax = [12.7, 55, 97, 139.3, 182, 224, 266, 308.6, 351, 393.3, 435.3, 478];
    const leg = [[144, 173], [203, 233], [263, 293], [323, 352]];
    return html`<svg class="chart-svg" width="525" height="275" viewBox="-13 463 525 275">
      <defs>
        <filter id="glow" x="-10%" y="-30%" width="120%" height="160%"><feGaussianBlur stdDeviation="3"/></filter>
        <linearGradient id="fadeV" gradientUnits="userSpaceOnUse" x1="0" y1="470" x2="0" y2="660"><stop offset="0" stop-color="#5f5f5f"/><stop offset=".55" stop-color="#545454"/><stop offset="1" stop-color="#404040"/></linearGradient>
      </defs>
      ${hs.map((y, i) => svg`<line x1="-13" x2="499" y1=${460 + y / 3} y2=${460 + y / 3} stroke="#5f5f5f" stroke-opacity=${i < 5 ? 1 : i === 5 ? 0.7 : i === 6 ? 0.45 : 0.15}/>`)}
      ${vs.map((x) => svg`<line x1=${x / 3} x2=${x / 3 + 0.01} y1="470.500" y2="660" stroke="url(#fadeV)"/>`)}
      ${SERIES.map((s) => svg`<path d=${smooth(s.pts)} fill="none" stroke=${s.g} stroke-width="8" stroke-opacity=".6" filter="url(#glow)"/>`)}
      ${SERIES.map((s) => svg`<path d=${smooth(s.pts)} fill="none" stroke=${s.c} stroke-width="1.700"/>`)}
      ${MONTHS.map((m, i) => svg`<text x=${ax[i]} y="692.500" text-anchor="middle" dominant-baseline="middle" class="axl">${m}</text>`)}
      ${leg.map(([x, t], i) => svg`<line x1=${x} x2=${x + 27} y1="718.500" y2="718.500" stroke=${SERIES[i].c} stroke-width="1.500"/><text x=${t} y="718.500" dominant-baseline="middle" class="lg">张${i + 1}</text>`)}
    </svg>`;
  }

  private barChart() {
    const lines = [43, 163, 283, 403, 523];
    const ticks = [370, 745, 1120, 1495];
    const labels: [string, number][] = [["一季度", 60], ["二季度", 185], ["三季度", 311], ["四季度", 436]];
    return html`<svg class="chart-svg" width="526" height="251" viewBox="-13 739 526 251">
      ${chartDefs}
      ${lines.map((y) => svg`<line x1="-13" x2="497" y1=${740 + y / 3} y2=${740 + y / 3} stroke="#6c6c6c"/>`)}
      ${BARS.map((g) => g.map(([x, t], i) => svg`<rect x=${x / 3} y=${740 + t / 3} width="22" height=${(641 - t) / 3} fill=${FILLS[i]}/>`))}
      <line x1="-13" x2="498.500" y1="954.500" y2="954.500" stroke="#bdbdbd"/>
      ${ticks.map((x) => svg`<line x1=${x / 3} x2=${x / 3} y1="954" y2="958" stroke="#bdbdbd"/>`)}
      ${labels.map(([t, x]) => svg`<text x=${x} y="974" text-anchor="middle" dominant-baseline="middle" class="axq">${t}</text>`)}
    </svg>`;
  }

  private big(icon: unknown, label: unknown, w: string) {
    return html`<div class="bigbtn ${w}"><div class="ic">${icon}</div><div>${label}</div><div class="arr"></div></div>`;
  }

  private ribbon() {
    const L = Icons.launcher;
    return html`<div class="ribbon">
      <div class="grp g-clip"><div class="clip-body"><div class="arr clip-arrow"></div><div class="clip-txt">刷</div></div><div class="launch">${L}</div></div>

      <div class="grp g-font">
        <div class="gbody stack">
          <div class="f1">
            <div class="sel fn">宋体<span class="arr"></span></div>
            <div class="sel fz">11<span class="arr"></span></div>
            <div class="g">${Icons.grow}</div>
            <div class="s">${Icons.shrink}</div>
          </div>
          <div class="r f2">
            <span class="b">B</span><span class="i">I</span><span class="u">U</span><span class="arr"></span><span class="sep"></span>
            ${Icons.border}<span class="arr"></span><span class="sep"></span>
            ${Icons.fill}<span class="arr"></span>${Icons.color}<span class="arr"></span><span class="sep"></span>
            ${Icons.wen}<span class="arr"></span>
          </div>
        </div>
        <div class="glabel">字体</div><div class="launch">${L}</div>
      </div>

      <div class="grp g-align">
        <div class="gbody stack">
          <div class="r a">
            ${ico(16, 16, svg`<path d="M1 2h14M1 5.500h14M1 9h14" stroke="#666"/>`)}
            <span class="on">${ico(16, 16, svg`<path d="M1 4h14M1 8h14M1 12h14" stroke="#666"/>`)}</span>
            ${ico(16, 16, svg`<path d="M1 7h14M1 10.500h14M1 14h14" stroke="#666"/>`)}
            <span class="sep"></span>
            ${Icons.orient}
            <span class="arr st"></span>
            <span class="sep"></span>
            ${Icons.wrap}
            <span class="txt">自动换行</span><span></span>
          </div>
          <div class="r a">
            ${alignLines([2, 6, 10, 14], "l")}${alignLines([2, 6, 10, 14], "c")}${alignLines([2, 6, 10, 14], "r")}
            <span class="sep"></span>
            ${Icons.indentL}${Icons.indentR}
            <span class="sep"></span>
            ${Icons.merge}
            <span class="txt">合并后居中</span><span class="arr mergearr"></span>
          </div>
        </div>
        <div class="glabel">对齐方式</div><div class="launch">${L}</div>
      </div>

      <div class="grp g-num">
        <div class="gbody stack">
          <div class="n1"><div class="sel">常规<span class="arr"></span></div></div>
          <div class="r n2">
            ${Icons.account}<span class="arr"></span><span class="pct">%</span><span class="comma">,</span><span></span><span class="sep"></span>${Icons.decI}${Icons.decD}
          </div>
        </div>
        <div class="glabel">数字</div><div class="launch">${L}</div>
      </div>

      <div class="grp g-style">
        <div class="gbody hrow">
          ${this.big(Icons.cond, "条件格式", "w60")}
          <div class="bigbtn w54"><div class="ic">${Icons.tableFmt}</div><div>套用</div><div class="inl">表格格式<span class="arr"></span></div></div>
          <div class="gallery">
            <div class="gcells">
              <div class="gc c-n2">常规 2</div><div class="gc c-n">常规</div><div class="gc c-bad">差</div><div class="gc c-good">好</div><div class="gc c-mid">适中</div>
              <div class="gc low c-calc">计算</div><div class="gc low c-chk">检查单元格</div><div class="gc low c-exp">解释性文本</div><div class="gc low c-warn">警告文本</div><div class="gc low c-link">链接单元格</div>
            </div>
            <div class="gscroll">
              <div class="dis"><span class="tinyu"></span></div>
              <div><span class="arr"></span></div>
              <div><span class="moredrop"><span class="barline"></span><span class="arr"></span></span></div>
            </div>
          </div>
        </div>
        <div class="glabel">样式</div>
      </div>

      <div class="grp g-cells">
        <div class="gbody hrow cells-row">
          ${this.big(Icons.insert, "插入", "w42")}
          ${this.big(Icons.del, "删除", "w42")}
          ${this.big(Icons.format, "格式", "w42")}
        </div>
        <div class="glabel">单元格</div>
      </div>

      <div class="grp g-edit">
        <div class="gbody hrow">
          <div class="small-col">
            <div class="sm"><span class="slot">${Icons.sigma}</span>自动求和<span class="arr"></span></div>
            <div class="sm"><span class="slot">${Icons.fillDown}</span>填充<span class="arr"></span></div>
            <div class="sm"><span class="slot">${Icons.eraser}</span>清除<span class="arr"></span></div>
          </div>
          ${this.big(Icons.sort, "排序和筛选", "w66")}
          ${this.big(Icons.find, "查找和选择", "w64")}
        </div>
        <div class="glabel">编辑</div>
      </div>
    </div>`;
  }

  private taskbar() {
    return html`<div class="taskbar">
      <div class="tb tb48">${Icons.start}</div>
      <div class="tb tb48">${Icons.taskView}</div>
      <div class="tbspace"></div>
      <div class="tb">${Icons.edge}</div>
      <div class="tb">${Icons.store}</div>
      <div class="tb">${Icons.mail}</div>
      <div class="tb run">${Icons.pinwheel}</div>
      <div class="tb run">${Icons.folder}</div>
      <div class="tb run wc">${Icons.wechat}</div>
      <div class="tb run"><div class="circle">oeilrss</div></div>
      <div class="tb run">${Icons.excelApp}</div>
      <div class="tb run">${Icons.camGreen}</div>
      <div class="tb run act">${Icons.camRed}</div>
      <div class="tray">
        <div class="ti">${Icons.up}</div>
        <div class="ti">${Icons.qq}</div>
        <div class="ti">${Icons.green}</div>
        <div class="ti">${Icons.wifi}</div>
        <div class="ti">${Icons.speaker}</div>
        <div class="ti">中</div>
        <div class="ti">${Icons.sogou}</div>
        <div></div>
        <div class="clock"><div>13:</div><div>2021</div></div>
      </div>
    </div>`;
  }

  render() {
    return html`<div class="app">
      <div class="title">
        <div class="qat">
          ${Icons.redoDim}
          <span class="q2"><span class="arr qarr"></span></span>
          <span class="q3">${Icons.preview}</span>
          <span class="q3">${Icons.qatDrop}</span>
        </div>
        <div class="doc">1-年度业绩分析表.xlsx - Excel</div>
        <div class="wins">${Icons.ribbonOpt}<div class="minbtn"></div></div>
      </div>

      <div class="tabs">
        <div class="tab-a">开始</div>
        <span>插入</span><span>页面布局</span><span>公式</span><span>数据</span><span>审阅</span><span>视图</span><span>开发工具</span><span>办公标签</span>
        <span class="pp">Power Pivot</span>
        <div class="tell">${Icons.bulb}<span>告诉我您想要做什么...</span></div>
      </div>

      ${this.ribbon()}
      <div class="strip"></div>
      <div class="fbar">
        <div class="namebox"><span class="arr"></span></div>
        <div class="dots">⋮</div>
        <div class="fxbox"><span>✕</span><span>✓</span><span class="fx">fx</span></div>
        <div class="finput"></div>
      </div>

      <div class="work">
        <div class="left">
          <div class="docrow">
            <div class="dtab"><span>析表.xlsx *</span><span class="x">✕</span></div>
            <div class="dnew"></div>
            <div class="dctl"><div><span class="tri-d"></span></div><div>✕</div></div>
          </div>
          ${this.colHead()}
          <div class="sheetrow">
            <div class="sheet">
              <div class="sgrid">
                <div class="lcol">
                  ${this.table1()}
                  <div class="c1">${this.lineChart()}</div>
                  <div class="c2">${this.barChart()}</div>
                </div>
                <div class="rcol">
                  ${this.table2()}
                  <div class="c3">${donut("517 462 330 275", 330, 275, 681.7, 584, 92, 45, [27, 31, 21, 21], [[733.3, 538.5], [713.3, 646], [619.3, 613], [639, 530.6]], true)}</div>
                  <div class="c4">${donut("517 739 330 251", 330, 251, 670, 877, 71, 37, [22, 27, 25, 26], [[705, 836.4], [711.7, 912], [632.3, 917], [630.7, 839]], false)}</div>
                </div>
              </div>
            </div>
            <div class="vs">
              <div class="btn"><span class="tri-u"></span></div>
              <div class="thumb"></div>
              <div class="gap"></div>
              <div class="btn"><span class="tri-dd"></span></div>
            </div>
          </div>
          <div class="stabs">
            <div class="st-on">Sheet1</div>
            <div class="st1">表格学院简介</div><div class="stsep"></div>
            <div class="st2">表格学院VIP,SVIP,直播年卡会员</div><div class="stsep"></div>
            <div class="stplus">${Icons.plus}</div>
            <div class="sdots">⋮</div>
            <div class="hs">
              <div class="btn"><span class="tri-l"></span></div>
              <div class="trk"></div>
              <div class="rest"></div>
              <div class="btn"><span class="tri-r"></span></div>
            </div>
          </div>
        </div>
        <div class="pane">
          <div class="ptitle">设置形状格式</div>
          <div class="picons"><span class="pi">${Icons.pFill}</span><span class="pi">${Icons.pShape}</span><span class="pi">${Icons.pSize}</span></div>
          <div class="pline"></div>
          <div class="psec first"><span class="t"><span class="tri-o"></span></span>填充</div>
          <div class="psec g2"><span class="t"><span class="tri-s"></span></span>线条</div>
          <div class="prad rad1"><span class="rd"><i></i></span>无线条(N)</div>
          <div class="prad"><span class="rd"></span>实线(S)</div>
          <div class="prad"><span class="rd"></span>渐变线(G)</div>
        </div>
      </div>

      <div class="status">
        <div class="vw on">${Icons.normal}</div>
        <div class="vw">${Icons.pageView}</div>
        <div class="vw">${Icons.breakView}</div>
        <div class="zm"></div>
        <div class="slider"><i></i></div>
      </div>
      ${this.taskbar()}

      <div class="fsw">
        <div class="fs-t">${Icons.fsLogo}<span>FastStone Capture</span><span class="m"></span><span class="c">✕</span></div>
        <div class="fs-b">
          <span class="k">${Icons.fsOpen}</span><span class="k">${Icons.fsWin}</span><span class="k">${Icons.fsWin2}</span><span class="k">${Icons.fsRect}</span><span class="k">${Icons.fsFree}</span><span class="k">${Icons.fsFull}</span><span class="k">${Icons.fsScroll}</span><span class="k">${Icons.fsFixed}</span><span class="k">${Icons.fsFilm}</span>
          <span class="ks"></span>
          <span class="k kw">${Icons.fsTimer}</span><span class="k">${Icons.fsPalette}</span><span class="fa"></span>
          <span class="ks"></span>
          <span class="k kw">${Icons.fsTag}</span>
        </div>
      </div>
      <div class="upl"><div class="ub">${Icons.cloud}</div><span>拖拽上传</span></div>
      <div class="cursor">${ico(13, 20, svg`<path d="M1 1v15l4-3.500 2.500 6 2.500-1-2.500-6H12z" fill="#fff" stroke="#000"/>`)}</div>
    </div>`;
  }
}
